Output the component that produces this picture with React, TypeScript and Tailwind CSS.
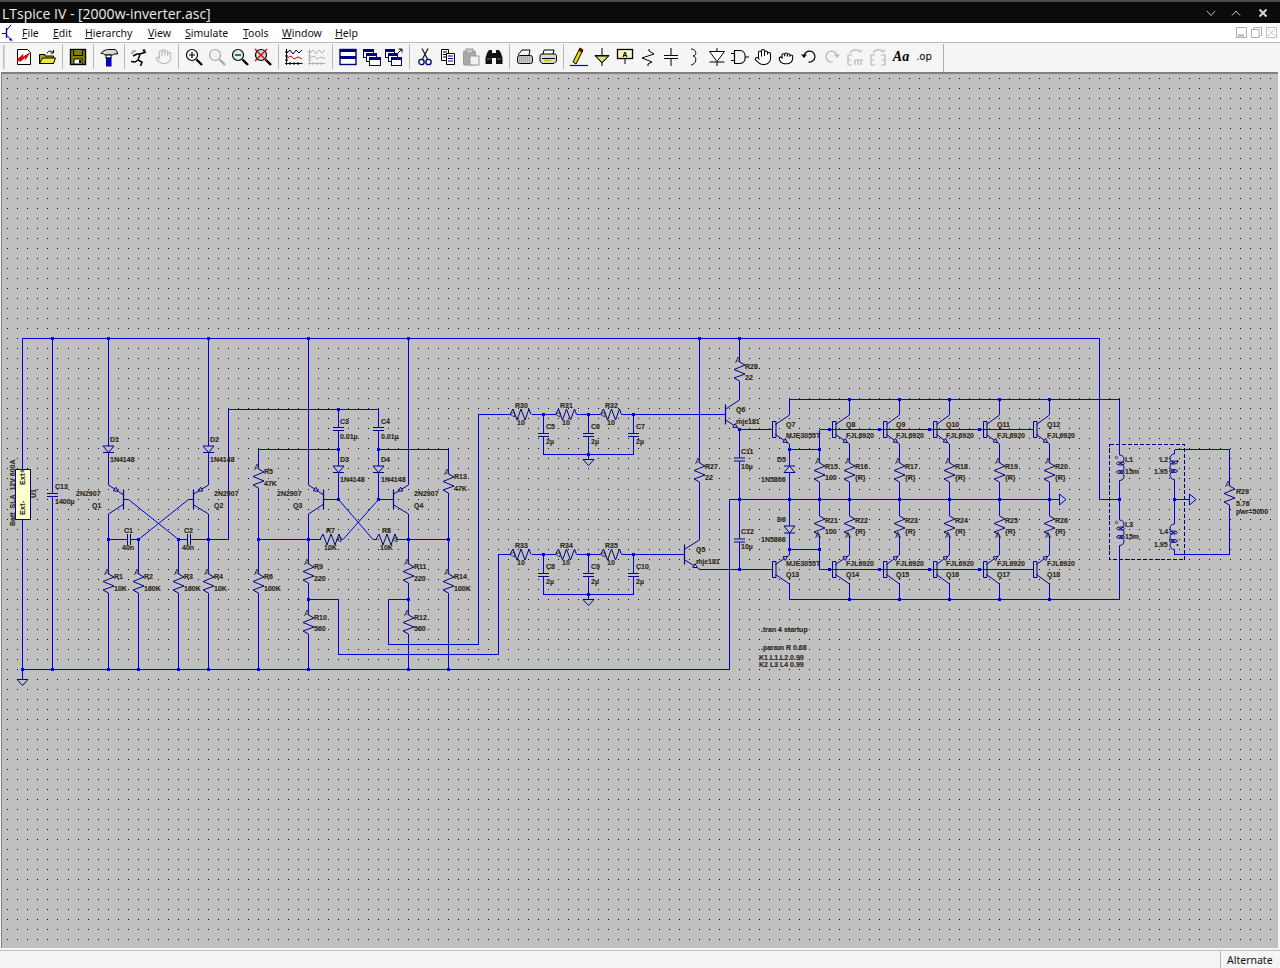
import React from "react";
import { Hand, Grab } from "lucide-react";

const WIRE = "#0000e6";
const NAVY = "#000090";
const BG = "#c0c0c0";

const wires: string[] = [
  "22.5,679 22.5,338.5 1099.5,338.5 1099.5,499.5 1119.5,499.5",
  "52.5,338.5 52.5,669.5",
  "22.5,669.5 729.5,669.5 729.5,499.5 1059,499.5",
  "108.5,338.5 108.5,485",
  "108.5,514 108.5,669.5",
  "208.5,338.5 208.5,485",
  "208.5,514 208.5,669.5",
  "128.5,499.5 178.5,539.5 178.5,669.5",
  "188.5,499.5 138.5,539.5 138.5,669.5",
  "108.5,539.5 138.5,539.5",
  "178.5,539.5 228.5,539.5 228.5,409.5 378.5,409.5 378.5,499.5",
  "338.5,409.5 338.5,499.5",
  "308.5,338.5 308.5,485",
  "308.5,514 308.5,669.5",
  "408.5,338.5 408.5,485",
  "408.5,514 408.5,669.5",
  "258.5,669.5 258.5,449.5 338.5,449.5",
  "378.5,449.5 448.5,449.5 448.5,669.5",
  "258.5,539.5 320.5,539.5",
  "341,539.5 343,539.5 378.5,499.5",
  "338.5,499.5 373,539.5 377,539.5",
  "396,539.5 448.5,539.5",
  "308.5,599.5 338.5,599.5 338.5,654.5 498.5,654.5 498.5,554.5 510,554.5",
  "408.5,599.5 388.5,599.5 388.5,644.5 478.5,644.5 478.5,414.5 510,414.5",
  "532,414.5 556,414.5",
  "577,414.5 600,414.5",
  "622,414.5 725,414.5",
  "532,554.5 556,554.5",
  "577,554.5 600,554.5",
  "622,554.5 684.5,554.5",
  "543.5,414.5 543.5,454.5 633.5,454.5 633.5,414.5",
  "588.5,414.5 588.5,459.5",
  "543.5,554.5 543.5,594.5 633.5,594.5 633.5,554.5",
  "588.5,554.5 588.5,599.5",
  "739.5,338.5 739.5,400",
  "739.5,429.5 739.5,569.5",
  "699.5,338.5 699.5,540",
  "699.5,569.5 772,569.5",
  "739.5,429.5 772,429.5",
  "789.5,415 789.5,399.5 1119.5,399.5 1119.5,599.5 789.5,599.5 789.5,583",
  "789.5,444 789.5,555",
  "789.5,449.5 819.5,449.5",
  "819.5,429.5 1033,429.5",
  "819.5,429.5 819.5,569.5 1033,569.5",
  "789.5,549.5 819.5,549.5",
  "1174.5,449.5 1229.5,449.5 1229.5,554.5 1174.5,554.5 1174.5,449.5",
  "1174.5,499.5 1189,499.5",
];

const cols = [
  [832, 849.5],
  [883, 899.5],
  [933, 949.5],
  [983, 999.5],
  [1033, 1049.5],
];
cols.forEach(([, c]) => wires.push(`${c},399.5 ${c},415`, `${c},444 ${c},555`, `${c},583 ${c},599.5`));

const junctions: [number, number][] = [
  [52.5, 338.5], [108.5, 338.5], [208.5, 338.5], [308.5, 338.5], [408.5, 338.5], [699.5, 338.5], [739.5, 338.5],
  [22.5, 669.5], [52.5, 669.5], [108.5, 669.5], [138.5, 669.5], [178.5, 669.5], [208.5, 669.5], [258.5, 669.5], [308.5, 669.5], [408.5, 669.5], [448.5, 669.5],
  [108.5, 539.5], [138.5, 539.5], [178.5, 539.5], [208.5, 539.5],
  [338.5, 409.5], [338.5, 449.5], [378.5, 449.5], [338.5, 499.5], [378.5, 499.5],
  [258.5, 539.5], [308.5, 539.5], [408.5, 539.5], [448.5, 539.5], [308.5, 599.5], [408.5, 599.5],
  [543.5, 414.5], [588.5, 414.5], [633.5, 414.5], [588.5, 454.5],
  [543.5, 554.5], [588.5, 554.5], [633.5, 554.5], [588.5, 594.5],
  [739.5, 429.5], [739.5, 499.5], [739.5, 569.5],
  [789.5, 449.5], [819.5, 449.5], [789.5, 499.5], [819.5, 499.5], [789.5, 549.5], [819.5, 549.5],
  [829.5, 429.5], [879.5, 429.5], [929.5, 429.5], [979.5, 429.5],
  [829.5, 569.5], [879.5, 569.5], [929.5, 569.5], [979.5, 569.5],
  [849.5, 399.5], [899.5, 399.5], [949.5, 399.5], [999.5, 399.5], [1049.5, 399.5],
  [849.5, 499.5], [899.5, 499.5], [949.5, 499.5], [999.5, 499.5], [1049.5, 499.5],
  [849.5, 599.5], [899.5, 599.5], [949.5, 599.5], [999.5, 599.5], [1049.5, 599.5],
  [1119.5, 499.5], [1174.5, 499.5],
];

type L = [string, number, number];
const labels: L[] = [
  ["D1", 110, 439.5], ["1N4148", 110, 459.5], ["2N2907", 76, 493.5], ["Q1", 92, 505], ["D2", 210, 439.5], ["1N4148", 210, 459.5], ["2N2907", 214, 493.5], ["Q2", 214, 505],
  ["C1", 124, 530.5], ["40n", 122, 547], ["C2", 184, 530.5], ["40n", 182, 547],
  ["R1", 114, 576.5], ["10K", 114, 588.5], ["R2", 144, 576.5], ["160K", 144, 588.5], ["R3", 184, 576.5], ["160K", 184, 588.5], ["R4", 214, 576.5], ["10K", 214, 588.5],
  ["C13", 55, 486.5], ["1400µ", 55, 501.5],
  ["C3", 340, 421.5], ["0.01µ", 340, 436.5], ["C4", 381, 421.5], ["0.01µ", 381, 436.5], ["D3", 340, 459.5], ["1N4148", 340, 479.5], ["D4", 381, 459.5], ["1N4148", 381, 479.5],
  ["2N2907", 277, 493.5], ["Q3", 293, 505], ["2N2907", 414, 493.5], ["Q4", 414, 505],
  ["R5", 264, 471.5], ["47K", 264, 483.5], ["R13", 454, 476.5], ["47K", 454, 488.5], ["R7", 326, 530.5], ["10K", 324, 547], ["R8", 382, 530.5], ["10K", 380, 547],
  ["R9", 314, 566.5], ["220", 314, 578.5], ["R10", 314, 617.5], ["560", 314, 628.5], ["R11", 414, 566.5], ["220", 414, 578.5], ["R12", 414, 617.5], ["560", 414, 628.5],
  ["R6", 264, 576.5], ["100K", 264, 588.5], ["R14", 454, 576.5], ["100K", 454, 588.5],
  ["R30", 515, 405.5], ["10", 517, 422.5], ["R31", 560, 405.5], ["10", 562, 422.5], ["R32", 605, 405.5], ["10", 607, 422.5],
  ["C5", 546, 426.5], ["2µ", 546, 441.5], ["C6", 591, 426.5], ["2µ", 591, 441.5], ["C7", 636, 426.5], ["2µ", 636, 441.5],
  ["R33", 515, 545.5], ["10", 517, 562.5], ["R34", 560, 545.5], ["10", 562, 562.5], ["R35", 605, 545.5], ["10", 607, 562.5],
  ["C8", 546, 566.5], ["2µ", 546, 581.5], ["C9", 591, 566.5], ["2µ", 591, 581.5], ["C10", 636, 566.5], ["2µ", 636, 581.5],
  ["R28", 745, 366.5], ["22", 745, 377.5], ["R27", 705, 466.5], ["22", 705, 477], ["Q6", 736, 409.5], ["mje181", 736, 421], ["C11", 741, 451.5], ["10µ", 741, 466.5],
  ["C12", 741, 531.5], ["10µ", 741, 546.5], ["Q5", 696, 549.5], ["mje181", 696, 561],
  ["Q7", 786, 424.5], ["MJE3055T", 786, 435.5], ["D5", 777, 459.5], ["1N5806", 761, 479.5], ["D6", 777, 519.5], ["1N5806", 761, 539.5],
  ["MJE3055T", 786, 563.5], ["Q13", 786, 574.5],
  ["R15", 825, 466.5], ["100", 825, 477], ["R21", 825, 520.5], ["100", 825, 531.5],
  [".tran 4 startup", 761, 629.5], [".param R 0.68", 761, 647.5], ["K1 L1 L2 0.99", 759, 657.5], ["K2 L3 L4 0.99", 759, 664.5],
  ["L1", 1125, 459.5], ["15m", 1125, 471.5], ["L3", 1125, 524.5], ["15m", 1125, 536.5], ["L2", 1160, 459.5], ["1.95", 1154, 471.5], ["L4", 1160, 531.5], ["1.95", 1154, 544.5],
  ["R29", 1236, 491.5], ["5.76", 1236, 503], ["pwr=5000", 1236, 511.5],
];
const topQ = ["Q8", "Q9", "Q10", "Q11", "Q12"];
const botQ = ["Q14", "Q15", "Q16", "Q17", "Q18"];
const qx = [846, 896, 946, 997, 1047];
const rx = [855, 905, 955, 1005, 1055];
qx.forEach((x, i) => {
  labels.push([topQ[i], x, 424.5], ["FJL6920", x, 435.5], ["FJL6920", x, 563.5], [botQ[i], x, 574.5]);
  labels.push([`R${16 + i}`, rx[i], 466.5], ["{R}", rx[i], 477], [`R${22 + i}`, rx[i], 520.5], ["{R}", rx[i], 531.5]);
});

function arrow(x1: number, y1: number, x2: number, y2: number, t: number) {
  const dx = x2 - x1, dy = y2 - y1, a = Math.atan2(dy, dx);
  const tx = x1 + dx * t, ty = y1 + dy * t;
  const b = 4.5;
  return `M${tx - b * Math.cos(a - 0.5)},${ty - b * Math.sin(a - 0.5)} L${tx},${ty} L${tx - b * Math.cos(a + 0.5)},${ty - b * Math.sin(a + 0.5)} Z`;
}

function Transistor({ bar, cy, col, kind, dbl }: { bar: number; cy: number; col: number; kind: "pnp" | "npn" | "npnTop"; dbl?: boolean }) {
  const b2 = dbl ? bar + 3.5 : bar;
  const h = dbl ? 8 : 10;
  const top: [number, number, number, number] = [col, cy - 14.5, b2, cy - 5];
  const bot: [number, number, number, number] = [b2, cy + 5, col, cy + 14.5];
  let ar = "";
  if (kind === "pnp") ar = arrow(col, cy - 14.5, b2, cy - 5, 0.65);
  if (kind === "npn") ar = arrow(b2, cy + 5, col, cy + 14.5, 0.85);
  if (kind === "npnTop") ar = arrow(b2, cy - 5, col, cy - 14.5, 0.85);
  return (
    <g stroke={NAVY} fill="none">
      <path d={`M${bar + 0.5},${cy - h} V${cy + h}`} strokeWidth={dbl ? 1 : 1.2} />
      {dbl && <path d={`M${b2 + 0.5},${cy - h} V${cy + h} M${bar + 0.5},${cy - h} H${b2 + 0.5} M${bar + 0.5},${cy + h} H${b2 + 0.5}`} />}
      <path d={`M${top[0]},${top[1]} L${top[2]},${top[3]} M${bot[0]},${bot[1]} L${bot[2]},${bot[3]}`} />
      {ar && <path d={ar} fill={BG} />}
    </g>
  );
}

function VRes({ x, y, bottom }: { x: number; y: number; bottom?: boolean }) {
  const w = 5.5;
  const d = `M${x},${y - 1} L${x + w},${y + 2} L${x - w},${y + 6.5} L${x + w},${y + 11} L${x - w},${y + 15} L${x},${y + 18}`;
  const my = bottom ? y + 20 : y - 1;
  return (
    <g fill="none">
      <rect x={x - 1} y={y - 1} width={2} height={19} fill={BG} />
      <path d={d} stroke={NAVY} />
      <path d={`M${x - 4},${my + 1} L${x - 1.5},${my - 5} L${x + 1},${my + 1} M${x - 3.4},${my - 1} H${x + 0.5}`} stroke="#222244" strokeWidth={0.8} />
    </g>
  );
}

function HRes({ x, y, mark }: { x: number; y: number; mark: "l" | "r" }) {
  const h = 5.5;
  const d = `M${x},${y} L${x + 3},${y - h} L${x + 7},${y + h} L${x + 11},${y - h} L${x + 15},${y + h} L${x + 19},${y - h} L${x + 21},${y}`;
  const mx = mark === "l" ? x + 2 : x + 18.5;
  return (
    <g fill="none">
      <path d={d} stroke={NAVY} />
      <path d={`M${mx + 2.5},${y - 2.5} L${mx - 2},${y} L${mx + 2.5},${y + 2.5} Z`} stroke="#222244" strokeWidth={0.8} />
    </g>
  );
}

function Diode({ x, a, b }: { x: number; a: number; b: number }) {
  return (
    <path d={`M${x - 5.5},${a} H${x + 5.5} L${x},${b} Z M${x - 5.5},${b} H${x + 5.5}`} stroke={NAVY} fill={BG} />
  );
}

function VCap({ x, y }: { x: number; y: number }) {
  return (
    <g>
      <rect x={x - 6} y={y} width={12} height={3} fill={BG} />
      <path d={`M${x - 5.5},${y} H${x + 5.5} M${x - 5.5},${y + 3} H${x + 5.5}`} stroke={NAVY} />
    </g>
  );
}
function HCap({ x, y }: { x: number; y: number }) {
  return (
    <g>
      <rect x={x} y={y - 6} width={3} height={12} fill={BG} />
      <path d={`M${x},${y - 5.5} V${y + 5.5} M${x + 3},${y - 5.5} V${y + 5.5}`} stroke={NAVY} />
    </g>
  );
}
function Coil({ x, y, dir }: { x: number; y: number; dir: 1 | -1 }) {
  const b = 6 * dir;
  let d = `M${x},${y}`;
  for (let i = 0; i < 3; i++) {
    const s = y + i * 8.5;
    d += ` M${x},${s} C${x + b},${s} ${x + b},${s + 8.5} ${x},${s + 8.5}`;
  }
  return (
    <g fill="none" stroke={NAVY}>
      <rect x={x - 1} y={y} width={2} height={25.5} fill={BG} stroke="none" />
      <path d={d} />
      <ellipse cx={x + dir} cy={y + 8.5} rx={4} ry={1.5} />
      <ellipse cx={x + dir} cy={y + 17} rx={4} ry={1.5} />
    </g>
  );
}
function Gnd({ x, y }: { x: number; y: number }) {
  return <path d={`M${x - 5.5},${y} H${x + 5.5} L${x},${y + 6} Z`} fill="none" stroke={NAVY} />;
}
function Flag({ x, y }: { x: number; y: number }) {
  return <path d={`M${x},${y - 5.5} V${y + 5.5} L${x + 6.5},${y} Z`} fill="none" stroke={WIRE} />;
}

function gridPath() {
  let d = "";
  for (let j = 0; j < 87; j++) {
    const y = Math.floor(78.3 + 10.0174 * j);
    for (let i = 0; i < 127; i++) {
      const x = Math.floor(7.9 + 10.0174 * i);
      d += `M${x},${y}h1v1h-1z`;
    }
  }
  return d;
}
const GRID = gridPath();
const DIAG = /(128\.5,499|188\.5,499|343,539|338\.5,499\.5 373)/;

function Schematic() {
  return (
    <svg viewBox="2 74 1276 874" className="block w-[1276px] h-[874px] font-['Liberation_Sans',sans-serif]">
      <path d={GRID} fill="#000" shapeRendering="crispEdges" />
      <g fill="none" stroke={WIRE} strokeWidth={1} shapeRendering="crispEdges">
        {wires.filter((w) => !DIAG.test(w)).map((w, i) => (
          <polyline key={i} points={w} />
        ))}
      </g>
      <g fill="none" stroke={WIRE} strokeWidth={1}>
        {wires.filter((w) => DIAG.test(w)).map((w, i) => (
          <polyline key={i} points={w} />
        ))}
      </g>
      {junctions.map(([x, y], i) => (
        <rect key={i} x={x - 1.5} y={y - 1.5} width={3} height={3} fill={WIRE} shapeRendering="crispEdges" />
      ))}

      {/* Battery */}
      <rect x={15.5} y={469.5} width={15} height={50} fill="#ffffcc" stroke={NAVY} />

      <VCap x={52.5} y={493.5} />
      <HCap x={127.5} y={539.5} />
      <HCap x={187.5} y={539.5} />
      {[[338.5, 427.5], [378.5, 427.5], [543.5, 433.5], [588.5, 433.5], [633.5, 433.5], [543.5, 573.5], [588.5, 573.5], [633.5, 573.5], [739.5, 458], [739.5, 539]].map(([x, y], i) => (
        <VCap key={i} x={x} y={y} />
      ))}

      <Diode x={108.5} a={446} b={452.5} />
      <Diode x={208.5} a={446} b={452.5} />
      <Diode x={338.5} a={466} b={472.5} />
      <Diode x={378.5} a={466} b={472.5} />
      <Diode x={789.5} a={472.5} b={466} />
      <Diode x={789.5} a={526} b={533} />

      <Transistor bar={123} cy={499.5} col={108.5} kind="pnp" />
      <Transistor bar={193} cy={499.5} col={208.5} kind="pnp" />
      <Transistor bar={323} cy={499.5} col={308.5} kind="pnp" />
      <Transistor bar={393} cy={499.5} col={408.5} kind="pnp" />
      <path d="M124,499.5 H128.5 M189,499.5 H193 M324,499.5 H338 M379,499.5 H393" stroke={WIRE} shapeRendering="crispEdges" />
      <Transistor bar={725} cy={414.5} col={739.5} kind="npn" />
      <Transistor bar={684} cy={554.5} col={699.5} kind="npn" />
      <Transistor bar={772} cy={429.5} col={789.5} kind="npn" dbl />
      <Transistor bar={772} cy={569.5} col={789.5} kind="npnTop" dbl />
      {cols.map(([b, c]) => (
        <g key={c}>
          <Transistor bar={b} cy={429.5} col={c} kind="npn" dbl />
          <Transistor bar={b} cy={569.5} col={c} kind="npnTop" dbl />
        </g>
      ))}

      {[108.5, 138.5, 178.5, 208.5, 258.5, 448.5].map((x) => (
        <VRes key={x} x={x} y={575} />
      ))}
      <VRes x={258.5} y={470} />
      <VRes x={448.5} y={475} />
      <VRes x={308.5} y={565} />
      <VRes x={308.5} y={616} />
      <VRes x={408.5} y={565} />
      <VRes x={408.5} y={616} />
      <VRes x={739.5} y={363} />
      <VRes x={699.5} y={464} />
      <VRes x={819.5} y={464} />
      <VRes x={819.5} y={517} bottom />
      {cols.map(([, c]) => (
        <g key={c}>
          <VRes x={c} y={464} />
          <VRes x={c} y={517} bottom />
        </g>
      ))}
      <VRes x={1229.5} y={487} />

      <HRes x={320} y={539.5} mark="r" />
      <HRes x={376} y={539.5} mark="r" />
      {[[510, 414.5], [555.5, 414.5], [600.5, 414.5], [510, 554.5], [555.5, 554.5], [600.5, 554.5]].map(([x, y], i) => (
        <HRes key={i} x={x} y={y} mark="l" />
      ))}

      <Coil x={1119.5} y={455} dir={1} />
      <Coil x={1119.5} y={520} dir={1} />
      <Coil x={1174.5} y={454} dir={-1} />
      <Coil x={1174.5} y={524} dir={-1} />
      <g fill="#111">
        <circle cx={1177.5} cy={461} r={1} />
        <circle cx={1177.5} cy={545} r={1} />
      </g>
      <g fill={BG} stroke="#223" strokeWidth={0.7}>
        <circle cx={1116.5} cy={457.5} r={1.2} />
        <circle cx={1116.5} cy={522.5} r={1.2} />
      </g>
      <rect x={1109.5} y={444.5} width={75} height={115} fill="none" stroke={NAVY} strokeDasharray="4 2" shapeRendering="crispEdges" />

      <Gnd x={22.5} y={679.5} />
      <Gnd x={588.5} y={459.5} />
      <Gnd x={588.5} y={599.5} />
      <Flag x={1059.5} y={499.5} />
      <Flag x={1189.5} y={499.5} />

      <g fontSize={7} fontWeight={700} fill="#30281a" stroke="#30281a" strokeWidth={0.12}>
        {labels.map(([t, x, y], i) => (
          <text key={i} x={x} y={y + 2.5}>{t}</text>
        ))}
        <text transform="translate(14.5,526) rotate(-90)">{"Batt\u00a0\u00a0SLA\u00a0\u00a012V 600A"}</text>
        <text transform="translate(24.5,485) rotate(-90)" letterSpacing={0.4}>Ext+</text>
        <text transform="translate(24.5,515) rotate(-90)" letterSpacing={0.4}>Ext-</text>
        <text transform="translate(35.5,498) rotate(-90)">U1</text>
      </g>
    </svg>
  );
}

/* toolbar icons */
const Ic = ({ children }: { children: React.ReactNode }) => (
  <svg viewBox="0 0 20 20" className="w-5 h-5 block">{children}</svg>
);
function Mag({ c = "#000", fill = "#fff", children }: { c?: string; fill?: string; children?: React.ReactNode }) {
  return (
    <Ic>
      <circle cx={8} cy={8} r={5.5} fill={fill} stroke={c} strokeWidth={1.2} />
      <path d="M12.5,12.5 L18,18" stroke={c} strokeWidth={2.4} />
      {children}
    </Ic>
  );
}
function Wave({ c }: { c?: string }) {
  return (
    <Ic>
      <path d="M2.5,2 V18 M1,16.5 H18.5 M1,13 h3 M1,9 h3 M1,5 h3 M6,18 v-3 M10,18 v-3 M14,18 v-3" stroke={c || "#000"} fill="none" />
      <path d="M3,6 L6,3 L9,7 L12,3 L15,6 L18,3" stroke={c || "#000080"} fill="none" />
      <path d="M3,11 L7,9 L10,12 L14,10 L18,12" stroke={c || "#e00000"} fill="none" />
    </Ic>
  );
}
function Win({ x, y, w, h }: { x: number; y: number; w: number; h: number }) {
  return (
    <g>
      <rect x={x + 0.5} y={y + 0.5} width={w} height={h} fill="#fff" stroke="#000080" />
      <rect x={x} y={y} width={w + 1} height={3} fill="#000080" />
    </g>
  );
}
const icons: React.ReactNode[] = [
  <Ic><path d="M3.5,2.5 H13.5 L16.5,5.5 V17.5 H3.5 Z" fill="#fff" stroke="#000" /><path d="M3.5,12.5 L9,7.5 L8.5,10.5 L15.5,6 L11.5,12.5 L11.5,10 L6,14.5 Z" fill="#e00000" stroke="#e00000" strokeWidth={0.8} /></Ic>,
  <Ic><path d="M2.5,7.5 H8 V9 H16.5 V16.5 H2.5 Z" fill="#a8a800" stroke="#000" /><path d="M2.5,16.5 L5.5,11 H18.5 L16.5,16.5 Z" fill="#e8e840" stroke="#000" /><path d="M10,6.5 C11,3.5 14,3.5 16,5.5 M16.5,3 V6 H13.5" stroke="#000" fill="none" /></Ic>,
  <Ic><rect x={2.5} y={2.5} width={15} height={15} fill="#808000" stroke="#000" strokeWidth={1.4} /><rect x={5.5} y={2.5} width={9} height={6} fill="#808000" stroke="#000" /><rect x={6} y={12} width={8} height={5} fill="#fff" stroke="#000" /><rect x={11} y={13} width={2} height={3} fill="#000" /></Ic>,
  <Ic><path d="M2,6.5 C4,3 8,2.5 11,2.5 H15 C17,2.5 18.5,4 18.5,7 H15 L13.5,8 H6 C4.5,6.5 3,6 2,6.5 Z" fill="#d8d8d8" stroke="#000" /><rect x={7} y={8} width={5} height={3} fill="#fff" stroke="#000" /><rect x={7.5} y={11} width={4.5} height={8} fill="#0000d0" stroke="#000080" /></Ic>,
  <Ic><circle cx={14} cy={3.5} r={1.3} fill="#000" /><path d="M3,9 L7,7 L10,7 L16,5 M10,7 L8,13 L12,15 L10.5,19 M8,13 L5,15 L1,14.5" stroke="#000" strokeWidth={1.5} fill="none" /><path d="M2,4 h4 M1,6 h3" stroke="#777" /></Ic>,
  <Hand size={17} color="#b4b4b4" strokeWidth={1.5} />,
  <Mag><path d="M5,8 H11 M8,5 V11" stroke="#000" strokeWidth={1.2} /></Mag>,
  <Mag c="#a8a8a8" fill="#f0f0f0" />,
  <Mag fill="#d8f0f0"><path d="M5,8 H11" stroke="#000" strokeWidth={1.2} /></Mag>,
  <Mag fill="#b8e0e0"><path d="M2,2 L14,14 M14,2 L2,14" stroke="#e00000" strokeWidth={1.4} /></Mag>,
  <Wave />,
  <Wave c="#b0b0b0" />,
  <Ic><rect x={2} y={2.5} width={16} height={15} fill="#fff" stroke="#000080" strokeWidth={1.4} /><rect x={2} y={2} width={16} height={3} fill="#000080" /><rect x={2} y={9} width={16} height={3} fill="#000080" /></Ic>,
  <Ic><Win x={2} y={2} w={10} h={8} /><Win x={5} y={6} w={10} h={8} /><Win x={8} y={10} w={11} h={8} /></Ic>,
  <Ic><Win x={1} y={2} w={9} h={8} /><Win x={4} y={6} w={9} h={8} /><Win x={7} y={10} w={10} h={8} /><path d="M13,7 L18,2 M14.5,2 H18 V5.5" stroke="#000" fill="none" /></Ic>,
  <Ic><path d="M7,1.5 L12.5,12 M13,1.5 L7.5,12" stroke="#111" strokeWidth={1.2} fill="none" /><circle cx={6.5} cy={15} r={2.7} fill="none" stroke="#000080" strokeWidth={1.3} /><circle cx={13.5} cy={15} r={2.7} fill="none" stroke="#000080" strokeWidth={1.3} /></Ic>,
  <Ic><path d="M3.5,2.5 H10.5 V13.5 H3.5 Z M5,5 H9 M5,7.5 H9 M5,10 H9" fill="#fff" stroke="#000" /><path d="M8.5,6.5 H16.5 V17.5 H8.5 Z" fill="#fff" stroke="#000" /><path d="M10,9 H15 M10,11.5 H15 M10,14 H15" stroke="#000080" /></Ic>,
  <Ic><rect x={2.5} y={4} width={12} height={14} rx={1} fill="#a8a8a8" stroke="#999" /><rect x={5} y={2} width={7} height={4} fill="#c8c8c8" stroke="#999" /><rect x={9} y={9} width={9} height={9} fill="#f0f0f0" stroke="#999" /></Ic>,
  <Ic><path d="M3,6 L5,3 H8 V17 H1.5 V11 Z M17,6 L15,3 H12 V17 H18.5 V11 Z" fill="#111" /><rect x={8} y={6} width={4} height={5} fill="#111" /><path d="M3,12 H7 M13,12 H17" stroke="#777" /></Ic>,
  <Ic><path d="M3,8 L7,3 H15 L14,8" fill="#fff" stroke="#000" /><rect x={2.5} y={8.5} width={15} height={8} rx={2} fill="#c8c8c8" stroke="#000" /><path d="M4,10 H16 M4,12 H16 M4,14 H16" stroke="#888" strokeDasharray="1 1" /></Ic>,
  <Ic><path d="M5,7 L6,3 H16 L15,7" fill="#fff" stroke="#000" /><path d="M2,9 C2,7.5 3,7 5,7 H16 C18,7 18.5,8 18.5,9 V14 L16,16.5 H4 L2,14 Z" fill="#d8d8d8" stroke="#000" /><path d="M4,11.5 H17" stroke="#000" /><path d="M6,13.5 H13" stroke="#d0c000" strokeWidth={1.6} /></Ic>,
  <Ic><path d="M1,18.5 H19" stroke="#0000d0" strokeWidth={1.2} /><path d="M4,15 L10,3 L13,5 L7,17 Z" fill="#f0d000" stroke="#000" /><path d="M10,3 L13,5 L14,3 L11,1 Z" fill="#e00000" stroke="#000" /></Ic>,
  <Ic><path d="M10,1 V8 M3,8.5 H17 L10,16 Z M10,16 V19" stroke="#000" fill="none" /><path d="M3.5,9 H16.5 L10,15.5 Z" fill="#e0e080" stroke="#000" /></Ic>,
  <Ic><rect x={2.5} y={2.5} width={15} height={9} fill="#f8f8c0" stroke="#000" strokeWidth={1.3} /><path d="M10,11.5 V17" stroke="#000" /><text x={10} y={10} textAnchor="middle" fontSize={8} fontFamily="Liberation Mono" fontWeight={700}>A</text></Ic>,
  <Ic><path d="M11,2 V4 L16,7 L4,11 L14,15 L10,17 V19" stroke="#000" fill="none" /></Ic>,
  <Ic><path d="M10,1 V8 M10,11 V19 M3,8.5 H17 M3,11.5 H17" stroke="#000" fill="none" /></Ic>,
  <Ic><path d="M7,2 C13,2 13,9 9,9 C13,9 13,17 7,18" stroke="#000" fill="none" /></Ic>,
  <Ic><path d="M2.5,4.5 H17.5 L10,14.5 Z M2.5,15 H17.5 M10,1 V4 M10,15 V19" stroke="#000" fill="#fff" /></Ic>,
  <Ic><path d="M4.5,3.5 H10 C17,3.5 17,16.5 10,16.5 H4.5 Z M1,6.5 H4.5 M1,13.5 H4.5 M15,10 H19" stroke="#000" fill="none" strokeWidth={1.2} /></Ic>,
  <Hand size={18} color="#000" fill="#fff" strokeWidth={1.4} />,
  <Grab size={16} color="#000" fill="#fff" strokeWidth={1.6} />,
  <Ic><path d="M5,9 A5.5,5.5 0 1 1 9.5,15" stroke="#000" strokeWidth={1.2} fill="none" /><path d="M2,7.5 L8,7.5 L5,11 Z" fill="#000" /></Ic>,
  <Ic><path d="M15,9 A5.5,5.5 0 1 0 10.5,15" stroke="#b8b8b8" strokeWidth={1.4} fill="none" /><path d="M18,7.5 L12,7.5 L15,11 Z" fill="#b8b8b8" /></Ic>,
  <Ic><path d="M3,18 V8 H7 M3,13 H6 M3,18 H7 M10,13 V18 M13,13 V18 M16,13 V18 M10,13 H18 M5,6 C7,2 13,2 15,5 M13,3 L15,5 L17,3" stroke="#b8b8b8" strokeWidth={1.2} fill="none" /></Ic>,
  <Ic><path d="M3,18 V8 H7 M3,13 H6 M3,18 H7 M13,8 H17 V18 H13 M14,13 H17 M5,6 C7,2 13,2 15,5 M13,3 L15,5 L17,3" stroke="#b8b8b8" strokeWidth={1.2} fill="none" /></Ic>,
  <span className="font-['Liberation_Serif',serif] font-bold italic text-[14px] leading-none text-black">Aa</span>,
  <span className="font-['DejaVu_Sans',sans-serif] text-[10px] leading-none text-black">.op</span>,
];
const seps = new Set([2, 3, 4, 6, 10, 12, 15, 19, 21]);

function Toolbar() {
  return (
    <div className="flex h-[29px] bg-[#f5f5f5] items-center pl-[3px] pb-[2px]">
      <div className="w-[2px] h-[24px] bg-[#d8d8d8] border-l border-[#bbb] mr-[7.5px]" />
      {icons.map((ic, i) => (
        <React.Fragment key={i}>
          {seps.has(i) && (
            <div className="w-[8px] flex justify-center">
              <div className="w-px h-[25px] bg-[#b8b8b8]" />
            </div>
          )}
          <div className="w-[23px] h-[24px] flex items-center justify-center">{ic}</div>
        </React.Fragment>
      ))}
      <div className="w-px h-[28px] bg-[#b0b0b0] ml-[7px] mt-[2px]" />
    </div>
  );
}

const menu = [
  { a: "F", b: "ile", w: "w-[31px]" },
  { a: "E", b: "dit", w: "w-[32px]" },
  { a: "H", b: "ierarchy", w: "w-[63px]" },
  { a: "V", b: "iew", w: "w-[37px]" },
  { a: "S", b: "imulate", w: "w-[58px]" },
  { a: "T", b: "ools", w: "w-[39px]" },
  { a: "W", b: "indow", w: "w-[53px]" },
  { a: "H", b: "elp", w: "w-[30px]" },
];

export default function App() {
  return (
    <div className="relative w-[1280px] h-[968px] overflow-hidden bg-[#f5f5f5] flex flex-col font-['Noto_Sans',sans-serif]">
      {/* title */}
      <div className="h-[23px] bg-[#0b0b0b] border-t-2 border-t-[#4a4a4a] flex items-center justify-between pl-[2px]">
        <span className="text-[#ececec] text-[14px] leading-none font-['Open_Sans',sans-serif] mt-[2px]">LTspice IV - [2000w-inverter.asc]</span>
        <div className="flex items-center h-full pr-[12px] gap-[15px]">
          <svg viewBox="0 0 10 10" className="w-[10px] h-[10px]"><path d="M1,3 L5,7.5 L9,3" stroke="#c0c0c0" fill="none" /></svg>
          <svg viewBox="0 0 10 10" className="w-[10px] h-[10px]"><path d="M1,7.5 L5,3 L9,7.5" stroke="#c0c0c0" fill="none" /></svg>
          <svg viewBox="0 0 10 10" className="w-[10px] h-[10px] ml-[2px]"><path d="M1.5,1.5 L8.5,8.5 M8.5,1.5 L1.5,8.5" stroke="#d8d8d8" strokeWidth={2} fill="none" /></svg>
        </div>
      </div>
      {/* menu */}
      <div className="h-[20px] bg-white border-b border-b-[#b8b8b8] flex items-center text-[10.5px] leading-none text-[#111]">
        <svg viewBox="0 0 14 18" className="w-[14px] h-[18px] ml-[1px] mr-[7px]">
          <path d="M1,9.5 H5" stroke="#0000c0" /><path d="M5.5,4 V14" stroke="#0000c0" strokeWidth={1.4} />
          <path d="M5.5,6 L10,1" stroke="#000" /><path d="M5.5,11 L11,16.5" stroke="#0000c0" /><path d="M8,16 L11,17 L10,13.5 Z" fill="#0000c0" />
        </svg>
        {menu.map((m, i) => (
          <span key={i} className={`${m.w} pt-[2px]`}><u>{m.a}</u>{m.b}</span>
        ))}
        <div className="ml-auto flex gap-[4px] pr-[3px] -mt-px">
          <svg viewBox="0 0 11 11" className="w-[11px] h-[11px]"><rect x={0.5} y={0.5} width={10} height={10} fill="none" stroke="#b0b0b0" /><path d="M2,8.5 H8" stroke="#b0b0b0" strokeWidth={2} /></svg>
          <svg viewBox="0 0 11 11" className="w-[11px] h-[11px]"><rect x={0.5} y={2.5} width={7.5} height={8} fill="none" stroke="#b0b0b0" /><path d="M2.5,2.5 V0.5 H10.5 V8.5 H8" fill="none" stroke="#b0b0b0" /></svg>
          <svg viewBox="0 0 11 11" className="w-[11px] h-[11px]"><rect x={0.5} y={0.5} width={10} height={10} fill="none" stroke="#c4c4c4" /><path d="M2,2 L9,9 M9,2 L2,9" stroke="#c4c4c4" /></svg>
        </div>
      </div>
      <Toolbar />
      {/* canvas */}
      <div className="ml-px mr-[2px] h-[876px] bg-[#c0c0c0] border-t-2 border-l border-[#808080] overflow-hidden">
        <Schematic />
      </div>
      {/* status */}
      <div className="mt-[2px] h-[18px] border-t border-t-[#c0c0c0] flex justify-end text-[10.5px] leading-none text-[#111]">
        <div className="w-[60px] border-l border-l-[#b8b8b8] pl-[6px] pt-[4px]">Alternate</div>
      </div>
    </div>
  );
}
